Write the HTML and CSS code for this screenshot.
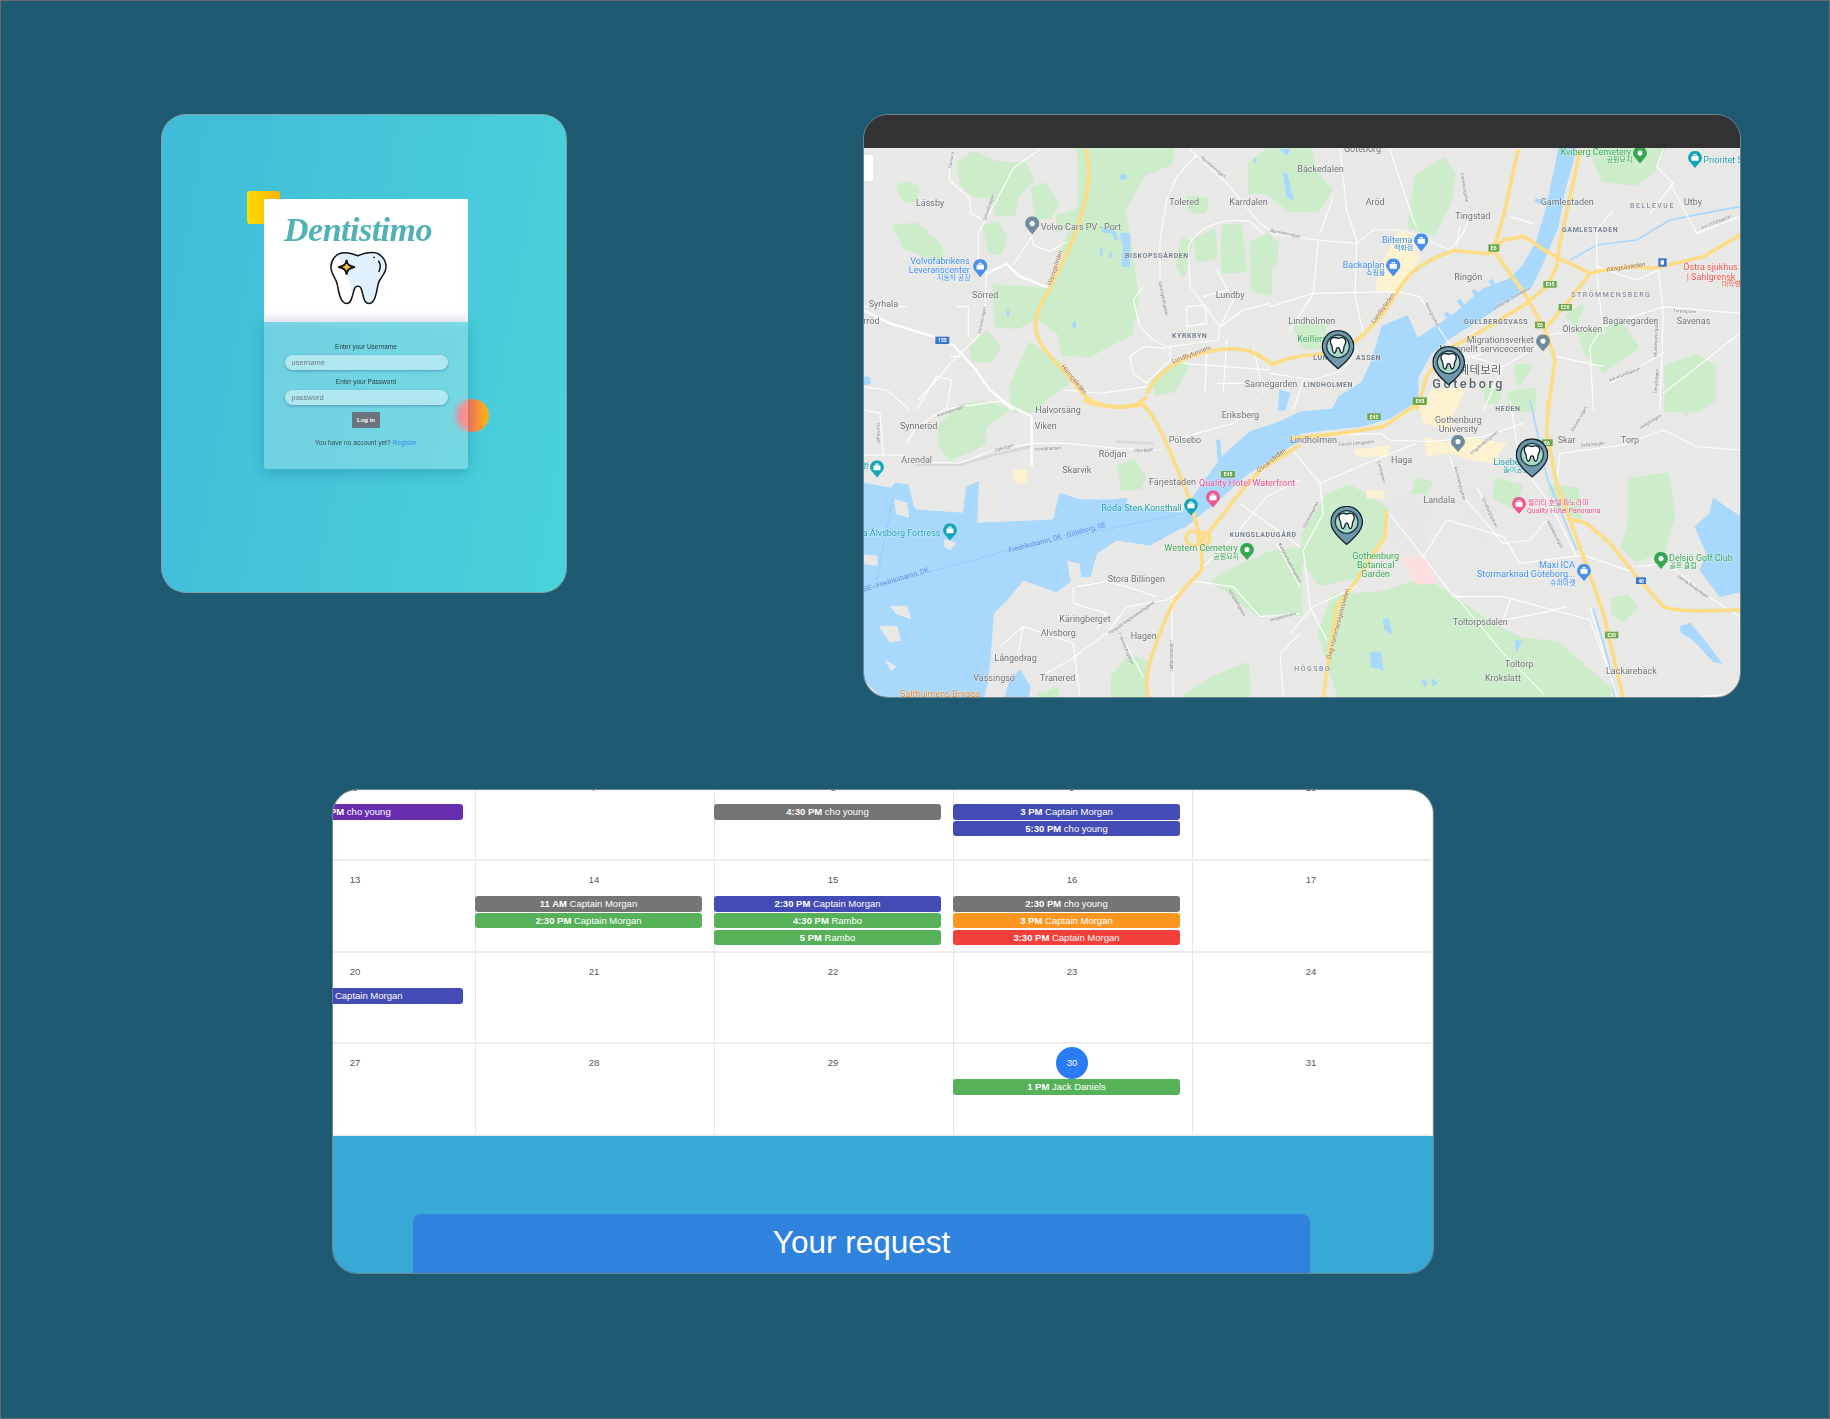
FILE: index.html
```html
<!DOCTYPE html>
<html lang="en">
  <head>
    <meta charset="UTF-8" />
    <meta name="viewport" content="width=device-width, initial-scale=1.0" />
    <title>Dentistimo</title>
    <link rel="stylesheet" href="styles.css">
  </head>
  <body>
    <div class="page">
      <div class="top-row">
        <!-- Login screen -->
        <section class="panel login">
          <div class="deco-square"></div>
          <div class="deco-circle"></div>
          <div class="logo-card">
            <div class="logo-text">Dentistimo</div>
            <svg class="logo-tooth" viewBox="262 212 184 168">
              <path class="tooth-base" d="M352 229C335 222 322 219 308 220C285 222 270 243 271 265C272 285 285 295 290 315C294 340 300 373 318 373C335 373 335 345 342 328C346 318 358 318 362 328C369 345 368 373 386 373C404 373 408 340 413 315C417 295 437 285 437 262C437 240 420 220 398 219C382 218 368 222 352 229Z"/>
              <path class="tooth-shade" d="M352 229C335 222 322 219 308 220C300 222 296 226 292 230C310 262 330 290 334 345C336 335 338 336 342 328C346 318 358 318 362 328C369 345 368 373 386 373C404 373 408 340 413 315C417 295 437 285 437 262C437 240 420 220 398 219C382 218 368 222 352 229Z"/>
              <path class="tooth-line" d="M352 229C335 222 322 219 308 220C285 222 270 243 271 265C272 285 285 295 290 315C294 340 300 373 318 373C335 373 335 345 342 328C346 318 358 318 362 328C369 345 368 373 386 373C404 373 408 340 413 315C417 295 437 285 437 262C437 240 420 220 398 219C382 218 368 222 352 229Z"/>
              <path class="tooth-line" d="M414 244C421 254 421 266 415 278"/>
              <circle cx="401" cy="234" r="2.5"/>
              <path class="tooth-star" d="M318 241C320 255 324 260 343 263C324 266 320 272 318 286C316 272 312 266 293 263C312 260 316 255 318 241Z"/>
            </svg>
          </div>
          <form class="login-form">
            <label class="login-label" for="username">Enter your Username</label>
            <input class="login-input" id="username" type="text" placeholder="username" />
            <label class="login-label" for="password">Enter your Password</label>
            <input class="login-input" id="password" type="text" placeholder="password" />
            <button class="login-btn" type="button">Log in</button>
            <p class="login-note">You have no account yet? <a href="#">Register</a></p>
          </form>
        </section>

        <!-- Map screen -->
        <section class="panel map-panel">
          <div class="map-bar"></div>
          <div class="map-wrap">
            <svg class="map" viewBox="863 148 878 550" width="878" height="550">
              <defs>
                <symbol id="pin" viewBox="0 0 98 118">
                  <path class="pin-body" d="M49 2A47 47 0 0 1 92 68C82 90 60 106 49 116C38 106 16 90 6 68A47 47 0 0 1 49 2Z"/>
                  <circle class="pin-disc" cx="49" cy="49" r="34"/>
                  <path class="pin-tooth" d="M49 25C44 23 39 22 35 23C28 24 25 30 26 36C27 42 30 45 31 50C32 58 33 69 38 69C43 69 43 60 45 55C46 52 52 52 53 55C55 60 55 69 60 69C65 69 66 58 67 50C68 45 72 42 72 36C72 29 67 23 62 23C58 22 54 23 49 25Z"/>
                </symbol>
                <symbol id="poi" viewBox="0 0 44 56">
                  <path fill="currentColor" d="M22 1A21 21 0 0 1 36 38L22 55L8 38A21 21 0 0 1 22 1Z"/>
                  <circle fill="#fff" cx="22" cy="22" r="8"/>
                </symbol>
                <symbol id="poi-box" viewBox="0 0 44 56">
                  <path fill="currentColor" d="M22 1A21 21 0 0 1 36 38L22 55L8 38A21 21 0 0 1 22 1Z"/>
                  <path fill="#fff" d="M11 17H33V32H11ZM17 17V11H27V17H24V14H20V17Z"/>
                </symbol>
              </defs>

              <!-- base shapes, north west -->
              <g transform="translate(850 100) scale(.33333)">
                <path class="park" d="M330 190L370 160L440 190L490 195L520 190L545 240L500 290L490 340L440 340L430 290L370 285L335 250Z"/>
                <path class="park" d="M145 260L170 250L200 265L195 300L165 300Z"/>
                <path class="park" d="M550 265L585 255L620 310L600 350L560 350Z"/>
                <path class="park" d="M405 380L440 372L465 410L450 458L420 455Z"/>
                <path class="park" d="M135 380L200 375L270 440L275 480L235 470L165 440Z"/>
                <path class="park" d="M685 148L965 148L960 190L880 220L820 330L850 520L860 600L840 700L780 730L720 765L640 760L630 700L575 660L600 560L650 480L640 440L690 350L625 390L625 350L690 330L690 180Z"/>
                <path class="park" d="M1040 420L1090 395L1095 470L1045 480Z"/>
                <path class="park" d="M985 500L1000 420L1020 430L1000 525Z"/>
                <path class="park" d="M1120 380L1170 380L1185 510L1120 515Z"/>
                <path class="park" d="M1205 430L1260 405L1260 580L1210 570Z"/>
                <path class="park" d="M1200 190L1260 148L1260 275L1200 275Z"/>
                <path class="park" d="M1015 295L1070 300L1060 335L1020 330Z"/>
                <path class="park" d="M435 560L590 570L570 650L500 680L440 675Z"/>
                <path class="park" d="M365 740L410 700L445 740L420 780L370 780Z"/>
                <path class="park" d="M485 860L540 735L640 800L650 850L590 890L560 930L490 930Z"/>
                <path class="park" d="M910 840L975 790L1010 800L970 870L920 880Z"/>
                <path class="water" d="M810 400L840 400L838 500L815 500L820 440Z"/>
                <ellipse class="water" cx="820" cy="231" rx="9" ry="8"/>
                <ellipse class="water" cx="754" cy="457" rx="3" ry="12"/>
                <ellipse class="water" cx="781" cy="466" rx="3" ry="8"/>
                <ellipse class="water" cx="474" cy="640" rx="3" ry="11"/>
                <ellipse class="water" cx="673" cy="675" rx="4" ry="11"/>
                <ellipse class="water" cx="50" cy="842" rx="12" ry="12"/>
                <ellipse class="water" cx="1215" cy="182" rx="3" ry="6"/>
                <path class="water-line" d="M755 390L790 395L800 420"/>
              </g>
              <!-- base shapes, north east -->
              <g transform="translate(1270 100) scale(.33333)">
                <path class="park" d="M0 148L120 148L130 210L180 270L140 330L60 330L0 280Z"/>
                <path class="park" d="M440 230L520 180L550 220L540 300L490 400L420 380Z"/>
                <path class="park" d="M960 148L1180 148L1150 210L1100 250L1000 240L985 200Z"/>
                <path class="park" d="M0 420L20 430L15 490L0 500Z"/>
                <path class="park" d="M75 680L160 680L170 740L100 740Z"/>
                <path class="park" d="M1190 800L1280 770L1330 800L1330 900L1280 930L1190 930Z"/>
                <path class="park" d="M930 700L1050 670L1100 740L1000 810L950 760Z"/>
                <path class="park" d="M895 650L935 620L915 670Z"/>
                <path class="park" d="M650 870L690 870L680 905L650 905Z"/>
                <path class="park" d="M720 880L790 870L790 930L720 930Z"/>
                <path class="park" d="M740 800L780 800L745 850Z"/>
                <path class="urban" d="M315 570L330 500L385 390L420 400L450 470L390 580Z"/>
                <path class="urban" d="M470 930L480 870L590 860L560 930Z"/>
                <path class="water" d="M40 220L50 220L70 300L50 290Z"/>
                <path class="water" d="M30 148L60 148L50 165Z"/>
                <path class="water" d="M30 870L60 880L45 930L25 930Z"/>
                <path class="water-line thin" d="M900 480L980 435L1100 420L1200 360L1300 340L1410 320"/>
                <path class="water-line" d="M610 570L630 600M565 600L585 625M525 640L545 655M660 540L680 565M795 300L830 310"/>
                <path class="water" d="M395 655L412 650L400 700L432 688L420 725L300 800L340 680Z"/>
              </g>
              <!-- base shapes, south west -->
              <g transform="translate(850 400) scale(.33333)">
                <path class="park" d="M270 80L330 20L400 10L470 30L400 80L400 130L300 175L270 130Z"/>
                <path class="park" d="M810 200L850 185L880 230L870 260L820 265Z"/>
                <path class="park" d="M1090 545L1170 500L1260 460L1350 450L1350 640L1220 640L1130 570Z"/>
                <path class="park" d="M790 830L840 770L890 790L880 895L790 895Z"/>
                <path class="park" d="M1000 895L1080 840L1190 795L1195 895Z"/>
                <path class="park" d="M570 885L620 870L620 895Z"/>
                <path class="urban" d="M490 208L530 208L530 250L495 250Z"/>
                <path class="water" d="M40 250L125 265L135 250L175 255L190 320L200 330L340 340L350 262L385 245L380 370L610 360L630 280L690 300L660 350L690 300L790 300L830 295L830 320L1000 340L1030 310L1110 240L1120 170L1200 100L1290 70L1350 40L1350 120L1290 160L1190 220L1100 300L1000 380L900 435L800 420L740 460L720 530L695 530L690 490L650 480L660 545L620 575L520 540L470 600L430 640L420 780L410 860L400 895L100 895L40 840Z"/>
                <path class="water" d="M1100 120L1110 120L1115 190L1105 190Z"/>
                <path class="water" d="M480 840L510 810L540 860L535 895L465 895Z"/>
                <path class="land" d="M135 300L170 310L175 350L140 340Z"/>
                <path class="land" d="M125 620L170 620L180 655L140 640Z"/>
                <path class="land" d="M90 680L140 680L150 720L120 725Z"/>
                <path class="land" d="M110 785L135 800L125 810Z"/>
                <path class="land" d="M40 465L80 470L80 495L45 490Z"/>
                <path class="land" d="M285 420L315 430L300 448L285 440Z"/>
                <path class="ferry" d="M80 540L130 290M40 570L480 450L1000 340"/>
              </g>
              <!-- base shapes, south east -->
              <g transform="translate(1290 400) scale(.33333)">
                <path class="park" d="M130 590L280 580L400 540L470 580L610 680L700 720L800 730L960 870L950 895L150 895L90 700Z"/>
                <path class="park" d="M40 410L110 290L180 260L210 280L290 330L270 420L200 530L90 550L40 480Z"/>
                <path class="park" d="M1020 240L1130 225L1150 340L1120 450L1090 460L1040 480L1000 440L1020 370Z"/>
                <path class="park" d="M970 600L1010 590L1035 620L1000 660L970 640Z"/>
                <path class="park" d="M620 240L690 260L670 320L615 290Z"/>
                <path class="park" d="M780 260L860 270L870 350L800 320Z"/>
                <path class="park" d="M1170 0L1210 0L1190 40Z"/>
                <path class="park" d="M380 240L420 250L395 300L370 280Z"/>
                <path class="urban" d="M190 150L300 135L290 170L200 170Z"/>
                <path class="urban" d="M230 270L280 270L280 295L230 295Z"/>
                <path class="urban" d="M400 110L470 130L520 110L650 130L610 190L540 180L480 160L410 170Z"/>
                <path class="urban" d="M380 0L500 0L480 90L400 70Z"/>
                <path class="pink" d="M330 470L410 470L440 550L380 555Z"/>
                <path class="plaza" d="M300 290L400 280L430 340L400 460L330 460L295 390Z"/>
                <path class="plaza" d="M510 260L560 240L640 380L570 440L520 360Z"/>
                <path class="water" d="M1270 295L1350 350L1350 575L1290 590L1230 510L1250 460L1215 380L1260 340Z"/>
                <path class="water" d="M1170 680L1200 670L1250 730L1295 790L1270 785L1210 720L1175 700Z"/>
                <path class="water" d="M280 660L295 655L305 700L285 690Z"/>
                <path class="water" d="M240 760L270 755L280 810L245 800Z"/>
                <path class="water" d="M675 720L695 725L680 752Z"/>
                <path class="water" d="M395 840L410 845L405 862Z"/>
                <path class="water" d="M425 835L442 850L428 858Z"/>
                <path class="water-line thin" d="M910 625L960 800L975 895"/>
                <path class="water-line thin" d="M720 0L740 90L770 230L860 450"/>
              </g>
              <!-- river, in page coordinates -->
              <path class="water" d="M1183 513L1223 457L1250 433L1280 423L1300 413L1333 410L1340 397L1363 383L1373 360L1383 327L1407 317L1417 340L1457 313L1483 290L1510 280L1523 267L1537 243L1547 210L1560 148L1575 148L1573 157L1563 193L1557 227L1543 260L1530 287L1503 303L1477 320L1450 337L1430 353L1417 377L1417 400L1390 417L1363 425L1290 433L1280 453L1247 473L1217 500L1183 527Z"/>

              <!-- minor roads -->
              <g class="roads" transform="translate(850 100) scale(.33333)">
                <path d="M570 148L490 205L440 300L385 400L385 480L410 520L405 640L385 710L300 790L270 830L205 900"/>
                <path class="wide" d="M40 630L120 670L250 710L310 735L370 800L420 870L490 930"/>
                <path class="wide" d="M410 520L470 492L510 530L600 565"/>
                <path d="M490 495L545 410L550 435L600 455L650 425"/>
                <path d="M300 150L298 240L360 295L362 340L400 360"/>
                <path d="M1020 148L1130 250L1230 370L1260 390"/>
                <path d="M1040 165L980 230L950 300L930 420L930 540"/>
                <path d="M1015 440C1040 380 1120 350 1200 365L1240 400"/>
                <path d="M1015 440L1020 560L1110 680L1105 720L960 740L960 780L890 850"/>
                <path d="M1110 680L1180 630L1260 610"/>
                <path d="M880 560L850 600L870 680L910 720L960 745"/>
                <path d="M1000 790L1260 810M1100 850L1260 850M1070 760L1065 880M1130 720L1120 880M1210 740L1240 880M1010 620L1065 615L1070 670L1010 680ZM1100 510L1150 600L1110 680M1060 590L1130 570M840 770L880 740L950 745M840 770L850 820L890 850"/>
                <path d="M640 870L750 880L890 860M40 860L110 870L180 930M200 930L260 830L305 840L290 925M300 925L470 900"/>
                <path d="M320 620L355 620L355 710M40 620L170 620M300 770L330 770"/>
              </g>
              <g class="roads" transform="translate(1270 100) scale(.33333)">
                <path d="M210 148L230 330L260 420L255 590L280 700M0 400L140 420L260 430L310 390L400 390L540 450M145 420L130 580L60 690M190 290L150 400M0 620L130 580L380 575L450 590L510 690L550 750"/>
                <path d="M360 148L430 360L440 380M570 380L560 440M600 350L580 400L540 450M720 350L790 370M1030 330L980 390L980 500L1100 540L1165 510M1165 510L1180 640L1170 930M980 520L1000 700M1200 250L1280 400L1410 350M1140 340L1210 250L1160 200L1180 148"/>
                <path d="M830 705L1000 680L1180 620L1410 640M1000 680L960 740L970 930M1180 760L1020 850M1180 880L1410 700M860 770L1000 800M640 930L700 800L800 740M500 800L640 760"/>
                <path d="M0 820L130 840L220 810L260 750M70 930L100 840M620 690L540 750L700 800"/>
              </g>
              <g class="roads" transform="translate(850 400) scale(.33333)">
                <path d="M40 165L150 165L190 185L330 190L430 150L550 130L650 130L800 145L930 150"/>
                <path class="wide" d="M450 0L545 50L545 200"/>
                <path d="M170 130L200 80L280 30L400 10M950 130L1040 100L1150 70L1210 30M40 30L90 40L100 165"/>
                <path d="M1040 540L950 600L830 620L770 700L660 780L570 830M680 560L770 545L830 560L920 590M670 560L670 610L770 640L740 690M450 740L520 680L670 730L690 895M810 700L880 830M965 600L970 895"/>
                <path d="M1040 545L1150 560L1230 650L1350 640M1060 500L1160 400L1250 290L1350 240M1170 310L1350 440M1280 430L1350 560M520 680L500 780M1300 895L1290 760L1350 700"/>
                <path class="rail" d="M195 195L330 195L430 165L540 140M800 125L910 130"/>
              </g>
              <g class="roads" transform="translate(1290 400) scale(.33333)">
                <path d="M0 110L270 100L300 120L420 125L580 110L700 70M290 330L400 470L470 360L640 410L690 490L880 465L1040 520"/>
                <path d="M490 580L640 760L760 880M400 470L490 590L640 590L900 660L970 850M810 160L1000 135L1120 90L1220 140L1350 150M810 160L800 250M660 0L690 190L780 310L860 470"/>
                <path d="M90 250L100 340L40 450L60 620L110 720M0 700L70 620L200 560M480 170L520 290L640 430M560 260L620 380M900 620L980 890M1040 500L1130 490L1270 600L1350 650M0 140L90 250L230 190L380 130M1230 890L1350 880M660 600L640 660L750 640L830 620M640 430L720 420L770 360"/>
              </g>

              <!-- highways -->
              <g class="hwys" transform="translate(850 100) scale(.33333)">
                <path d="M708 148C725 220 715 290 680 390C650 470 600 560 570 620C540 680 560 730 620 790C680 850 700 900 740 910C800 930 860 925 890 890"/>
                <path d="M890 880C920 820 980 770 1100 750C1180 740 1210 750 1270 795"/>
              </g>
              <g class="hwys" transform="translate(1270 100) scale(.33333)">
                <path d="M0 795C40 780 80 765 130 765L220 750C280 710 340 650 385 570C420 510 470 480 550 452L660 462"/>
                <path d="M745 148L700 350L670 450L770 590L830 700L855 780L835 930"/>
                <path d="M930 148C910 260 870 400 860 500L830 560L770 610L640 690L530 750L470 830L440 930"/>
                <path d="M660 460L700 420L760 410C800 430 840 470 900 490L960 520C1000 510 1060 495 1150 505L1300 470L1410 405"/>
                <path d="M960 520L890 610L830 680"/>
              </g>
              <g class="hwys" transform="translate(850 400) scale(.33333)">
                <path d="M700 0C740 20 800 25 880 15C920 50 950 130 1020 300C1050 400 1060 480 1055 510C1030 540 970 590 950 650C900 770 880 830 895 895"/>
                <path d="M1050 430L1090 380L1160 290L1230 210L1350 135"/>
                <circle cx="1030" cy="415" r="22"/>
                <circle cx="1062" cy="415" r="18"/>
              </g>
              <g class="hwys" transform="translate(1290 400) scale(.33333)">
                <path d="M0 115L150 100L280 80L370 20L385 0"/>
                <path d="M775 0L770 100L800 250L880 470L940 640L1000 895"/>
                <path d="M830 355L890 370L960 430L1040 530L1120 620C1180 640 1270 630 1350 630"/>
                <path d="M290 330L285 410L200 540L140 620L115 780L100 895"/>
              </g>

              <!-- route shields -->
              <g transform="translate(1270 100) scale(.33333)">
                <rect class="shield-g" x="655" y="433" width="33" height="22"/><text class="shield-t" x="671" y="450">E6</text>
                <rect class="shield-g" x="820" y="543" width="40" height="20"/><text class="shield-t" x="840" y="559">E45</text>
                <rect class="shield-g" x="866" y="612" width="40" height="20"/><text class="shield-t" x="886" y="628">E20</text>
                <rect class="shield-g" x="795" y="665" width="30" height="20"/><text class="shield-t" x="810" y="681">E6</text>
                <rect class="shield-g" x="428" y="895" width="42" height="20"/><text class="shield-t" x="449" y="911">E45</text>
                <rect class="shield-b" x="1165" y="475" width="25" height="25"/><rect fill="#fff" x="1172" y="481" width="10" height="13"/>
              </g>
              <g transform="translate(850 100) scale(.33333)">
                <rect class="shield-b" x="256" y="710" width="42" height="22"/><text class="shield-t" x="277" y="727">155</text>
              </g>
              <g transform="translate(850 400) scale(.33333)">
                <rect class="shield-g" x="1113" y="213" width="42" height="20"/><text class="shield-t" x="1134" y="229">E45</text>
              </g>
              <g transform="translate(1290 400) scale(.33333)">
                <rect class="shield-g" x="232" y="40" width="40" height="20"/><text class="shield-t" x="252" y="56">E45</text>
                <rect class="shield-g" x="370" y="-8" width="40" height="20"/><text class="shield-t" x="390" y="8">E45</text>
                <rect class="shield-g" x="755" y="118" width="33" height="20"/><text class="shield-t" x="771" y="134">E6</text>
                <rect class="shield-g" x="945" y="695" width="40" height="20"/><text class="shield-t" x="965" y="711">E20</text>
                <rect class="shield-b" x="1038" y="532" width="30" height="20"/><text class="shield-t" x="1053" y="548">40</text>
              </g>

              <!-- labels, north west -->
              <g class="labels" transform="translate(850 100) scale(.33333)">
                <text x="198" y="317">Lässby</text>
                <text x="572" y="389">Volvo Cars PV - Port</text>
                <text x="958" y="316">Tolered</text>
                <text x="1138" y="316">Karrdalen</text>
                <text class="area" x="825" y="473">BISKOPSGÅRDEN</text>
                <text class="blue" x="181" y="491">Volvofabrikens</text>
                <text class="blue" x="176" y="519">Leveranscenter</text>
                <text class="blue kr" x="261" y="540">지동차 공장</text>
                <text x="366" y="593">Sörred</text>
                <text x="1097" y="593">Lundby</text>
                <text x="56" y="622">Syrhala</text>
                <text x="40" y="672">rröd</text>
                <text class="area" x="966" y="715">KYRKBYN</text>
                <text x="1184" y="862">Sannegarden</text>
                <text class="hwy-lbl" transform="translate(604 557) rotate(-72)">Hisingsleden</text>
                <text class="hwy-lbl" transform="translate(632 800) rotate(50)">Hisingsleden</text>
                <text class="hwy-lbl" transform="translate(968 790) rotate(-20)">Lundbytunneln</text>
                <text class="road-lbl" transform="translate(408 362) rotate(-72)">Sörredsvägen</text>
                <text class="road-lbl" transform="translate(392 702) rotate(-78)">Sörredsvägen</text>
                <text class="road-lbl" transform="translate(303 205) rotate(-80)">Gamla S</text>
                <text class="road-lbl" transform="translate(1052 175) rotate(40)">Bjurslättsvägen</text>
                <text class="road-lbl" transform="translate(925 545) rotate(78)">Sannegårdsgatan</text>
              </g>
              <use href="#poi-box" class="c-blue" x="973" y="259" width="14.5" height="18.5"/>
              <use href="#poi" class="c-gray" x="1025" y="216" width="14.5" height="19"/>

              <!-- labels, north east -->
              <g class="labels" transform="translate(1270 100) scale(.33333)">
                <text x="222" y="157">Göteborg</text>
                <text x="82" y="216">Bäckedalen</text>
                <text x="287" y="316">Aröd</text>
                <text x="556" y="357">Tingstad</text>
                <text x="812" y="316">Gamlestaden</text>
                <text class="area wide-lbl" x="1080" y="323">BELLEVUE</text>
                <text x="1242" y="316">Utby</text>
                <text class="area" x="876" y="395">GAMLESTADEN</text>
                <text class="blue" x="336" y="428">Biltema</text>
                <text class="blue kr" x="372" y="450">백화점</text>
                <text class="blue" x="218" y="503">Backaplan</text>
                <text class="blue kr" x="288" y="525">쇼핑몰</text>
                <text x="553" y="541">Ringön</text>
                <text class="area wide-lbl" x="904" y="591">STRÖMMENSBERG</text>
                <text x="998" y="671">Bagaregarden</text>
                <text x="1220" y="671">Savenas</text>
                <text x="877" y="695">Olskroken</text>
                <text x="55" y="671">Lindholmen</text>
                <text class="green" x="82" y="726">Keillers</text>
                <text class="area" x="130" y="780">LUNDBY</text>
                <text class="area" x="258" y="780">ASSEN</text>
                <text class="area" x="582" y="672">GULLBERGSVASS</text>
                <text x="590" y="728">Migrationsverket</text>
                <text x="508" y="756">Nationellt servicecenter</text>
                <text class="area" x="100" y="862">LINDHOLMEN</text>
                <text class="city-kr" x="566" y="822">예테보리</text>
                <text class="city" x="487" y="864">Göteborg</text>
                <text class="green" x="872" y="164">Kviberg Cemetery</text>
                <text class="green kr" x="1010" y="186">공원묘지</text>
                <text class="teal" x="1300" y="189">Prioritet S</text>
                <text class="red" x="1240" y="511">Östra sjukhus</text>
                <text class="red" x="1250" y="539">| Sahlgrensk</text>
                <text class="red kr" x="1355" y="559">대학병</text>
                <text class="hwy-lbl" transform="translate(1010 515) rotate(-8)">Alingsåsleden</text>
                <text class="hwy-lbl" transform="translate(312 672) rotate(-54)">Lundbyleden</text>
                <text class="road-lbl" transform="translate(672 630) rotate(-30)">Gullbergs Strandgata</text>
                <text class="road-lbl" transform="translate(465 612) rotate(62)">Hisingsgatan</text>
                <text class="road-lbl" transform="translate(572 220) rotate(80)">Litteraturgatan</text>
                <text class="road-lbl" transform="translate(0 395) rotate(12)">Bjurslättsvägen</text>
                <text class="road-lbl" transform="translate(1295 388) rotate(-22)">von Utfallsgatan</text>
                <text class="road-lbl" transform="translate(1210 636) rotate(3)">Torpagatan</text>
                <text class="road-lbl" transform="translate(1160 770) rotate(-88)">Munkebäcksgatan</text>
                <text class="road-lbl" transform="translate(1020 845) rotate(-22)">Kärralundsgatan</text>
                <text class="road-lbl" transform="translate(1160 880) rotate(-85)">Delsjövägen</text>
              </g>
              <use href="#poi-box" class="c-blue" x="1414" y="233" width="14.5" height="19"/>
              <use href="#poi-box" class="c-blue" x="1386" y="258" width="14.5" height="19"/>
              <use href="#poi" class="c-gray" x="1536" y="334" width="14" height="18"/>
              <use href="#poi" class="c-green" x="1633" y="146" width="14" height="18"/>
              <use href="#poi-box" class="c-teal" x="1688" y="150" width="14" height="19"/>

              <!-- labels, south west -->
              <g class="labels" transform="translate(850 400) scale(.33333)">
                <text x="556" y="40">Halvorsäng</text>
                <text x="1115" y="54">Eriksberg</text>
                <text x="150" y="87">Synneröd</text>
                <text x="554" y="87">Viken</text>
                <text x="956" y="128">Pölsebo</text>
                <text x="154" y="189">Arendal</text>
                <text x="746" y="170">Rödjan</text>
                <text x="637" y="219">Skarvik</text>
                <text x="897" y="254">Färjestaden</text>
                <text class="pink" x="1047" y="259">Quality Hotel Waterfront</text>
                <text class="teal" x="754" y="334">Röda Sten Konsthall</text>
                <text class="teal" x="38" y="409">a Älvsborg Fortress</text>
                <text class="area" x="1139" y="411">KUNGSLADUGÅRD</text>
                <text class="green" x="943" y="454">Western Cemetery</text>
                <text class="green kr" x="1090" y="476">공원묘지</text>
                <text x="773" y="547">Stora Billingen</text>
                <text x="628" y="666">Käringberget</text>
                <text x="572" y="707">Alvsborg</text>
                <text x="842" y="717">Hagen</text>
                <text x="433" y="784">Långedrag</text>
                <text x="370" y="842">Vässingsö</text>
                <text x="570" y="842">Tranered</text>
                <text class="orange" x="150" y="892">Saltholmens Brygga</text>
                <text class="teal kr" x="38" y="204">한</text>
                <text class="ferry-lbl" transform="translate(478 458) rotate(-15)">Fredrikshamn, DK - Göteborg, SE</text>
                <text class="ferry-lbl" transform="translate(42 575) rotate(-17)">SE - Fredrikshamn, DK</text>
                <text class="hwy-lbl" transform="translate(1226 218) rotate(-38)">Oscarsleden</text>
                <text class="road-lbl" transform="translate(262 52) rotate(-20)">Arendalsvägen</text>
                <text class="road-lbl" transform="translate(80 70) rotate(88)">Grötvägen</text>
                <text class="road-lbl" transform="translate(435 155) rotate(-15)">Oljevägen</text>
                <text class="road-lbl" transform="translate(555 152) rotate(-3)">Nordatlanten</text>
                <text class="road-lbl" transform="translate(852 156) rotate(-3)">Oljevägen</text>
                <text class="road-lbl" transform="translate(778 705) rotate(-35)">Tångudd Seglarestadsgatan</text>
                <text class="road-lbl" transform="translate(805 700) rotate(68)">Fiskebäcksgatan</text>
                <text class="road-lbl" transform="translate(960 720) rotate(90)">Löjtnantsvägen</text>
                <text class="road-lbl" transform="translate(1135 570) rotate(60)">Hängdalsgatan</text>
                <text class="road-lbl" transform="translate(1262 665) rotate(-15)">Högsboleden</text>
                <text class="road-lbl" transform="translate(1285 432) rotate(62)">Kungsladugårdsgatan</text>
              </g>
              <use href="#poi-box" class="c-teal" x="870" y="460" width="14" height="18"/>
              <use href="#poi-box" class="c-teal" x="943" y="523" width="14" height="18"/>
              <use href="#poi-box" class="c-teal" x="1184" y="498" width="14" height="18"/>
              <use href="#poi-box" class="c-pink" x="1206" y="489" width="14" height="20"/>
              <use href="#poi" class="c-green" x="1240" y="542" width="14" height="19"/>

              <!-- labels, south east -->
              <g class="labels" transform="translate(1290 400) scale(.33333)">
                <text class="area" x="616" y="32">HEDEN</text>
                <text class="center" x="505" y="68">Gothenburg</text>
                <text class="center" x="505" y="96">University</text>
                <text x="0" y="128">Lindholmen</text>
                <text x="803" y="128">Skar</text>
                <text x="993" y="129">Torp</text>
                <text x="303" y="190">Haga</text>
                <text class="teal" x="610" y="196">Liseberg</text>
                <text class="teal kr" x="640" y="217">놀이공원</text>
                <text x="400" y="308">Landala</text>
                <text class="pink kr" x="713" y="316">퀄리티 호텔 파노라마</text>
                <text class="pink small" x="711" y="340">Quality Hotel Panorama</text>
                <text class="green center" x="257" y="476">Gothenburg</text>
                <text class="green center" x="257" y="503">Botanical</text>
                <text class="green center" x="257" y="531">Garden</text>
                <text class="green" x="1137" y="482">Delsjö Golf Club</text>
                <text class="green kr" x="1138" y="504">골프 클럽</text>
                <text class="blue" x="747" y="503">Maxi ICA</text>
                <text class="blue" x="561" y="531">Stormarknad Göteborg...</text>
                <text class="blue kr" x="780" y="554">슈퍼마켓</text>
                <text x="489" y="674">Toltorpsdalen</text>
                <text x="645" y="801">Toltorp</text>
                <text x="585" y="843">Krokslatt</text>
                <text x="948" y="821">Lackarebäck</text>
                <text class="area wide-lbl" x="13" y="812">HÖGSBO</text>
                <text class="hwy-lbl" transform="translate(122 778) rotate(-75)">Dag Hammarskjöldsleden</text>
                <text class="road-lbl" transform="translate(148 138) rotate(-5)">Första Långgatan</text>
                <text class="road-lbl" transform="translate(262 185) rotate(75)">Linnégatan</text>
                <text class="road-lbl" transform="translate(492 200) rotate(75)">Aschebergsgatan</text>
                <text class="road-lbl" transform="translate(575 295) rotate(65)">Götabergsgatan</text>
                <text class="road-lbl" transform="translate(545 165) rotate(-40)">Engelbrektsgatan</text>
                <text class="road-lbl" transform="translate(770 365) rotate(62)">Mölndalsvägen</text>
                <text class="road-lbl" transform="translate(872 140) rotate(-5)">Delsjövägen</text>
                <text class="road-lbl" transform="translate(1052 88) rotate(-32)">Delsjövägen</text>
                <text class="road-lbl" transform="translate(850 95) rotate(-60)">Danska vägen</text>
                <text class="road-lbl" transform="translate(1160 530) rotate(35)">Gamla Boråsvägen</text>
                <text class="road-lbl" transform="translate(45 385) rotate(-62)">Gröndalsgatan</text>
              </g>
              <use href="#poi" class="c-gray" x="1451" y="434" width="14" height="19"/>
              <use href="#poi-box" class="c-pink" x="1512" y="496" width="14" height="19"/>
              <use href="#poi-box" class="c-blue" x="1577" y="563" width="14" height="19"/>
              <use href="#poi" class="c-green" x="1654" y="551" width="14" height="19"/>

              <!-- clinic pins -->
              <use href="#pin" x="1321.7" y="330" width="32.7" height="39.3"/>
              <use href="#pin" x="1432.3" y="346" width="32.7" height="39.3"/>
              <use href="#pin" x="1515.7" y="438.3" width="32.7" height="39.3"/>
              <use href="#pin" x="1330.3" y="505.7" width="32.7" height="39.3"/>
            </svg>
            <div class="map-control"></div>
          </div>
        </section>
      </div>

      <!-- Calendar screen -->
      <section class="panel calendar">
        <div class="cal-view">
          <div class="cal-grid">
            <div class="cal-day"><div class="cal-num">6</div>
              <div class="ev ev-purple"><b>4:30 PM</b> cho young</div></div>
            <div class="cal-day"><div class="cal-num">7</div></div>
            <div class="cal-day"><div class="cal-num">8</div>
              <div class="ev ev-grey"><b>4:30 PM</b> cho young</div></div>
            <div class="cal-day"><div class="cal-num">9</div>
              <div class="ev ev-indigo"><b>3 PM</b> Captain Morgan</div>
              <div class="ev ev-indigo"><b>5:30 PM</b> cho young</div></div>
            <div class="cal-day"><div class="cal-num">10</div></div>

            <div class="cal-day"><div class="cal-num">13</div></div>
            <div class="cal-day"><div class="cal-num">14</div>
              <div class="ev ev-grey"><b>11 AM</b> Captain Morgan</div>
              <div class="ev ev-green"><b>2:30 PM</b> Captain Morgan</div></div>
            <div class="cal-day"><div class="cal-num">15</div>
              <div class="ev ev-indigo"><b>2:30 PM</b> Captain Morgan</div>
              <div class="ev ev-green"><b>4:30 PM</b> Rambo</div>
              <div class="ev ev-green"><b>5 PM</b> Rambo</div></div>
            <div class="cal-day"><div class="cal-num">16</div>
              <div class="ev ev-grey"><b>2:30 PM</b> cho young</div>
              <div class="ev ev-orange"><b>3 PM</b> Captain Morgan</div>
              <div class="ev ev-red"><b>3:30 PM</b> Captain Morgan</div></div>
            <div class="cal-day"><div class="cal-num">17</div></div>

            <div class="cal-day"><div class="cal-num">20</div>
              <div class="ev ev-indigo"><b>2:30 PM</b> Captain Morgan</div></div>
            <div class="cal-day"><div class="cal-num">21</div></div>
            <div class="cal-day"><div class="cal-num">22</div></div>
            <div class="cal-day"><div class="cal-num">23</div></div>
            <div class="cal-day"><div class="cal-num">24</div></div>

            <div class="cal-day"><div class="cal-num">27</div></div>
            <div class="cal-day"><div class="cal-num">28</div></div>
            <div class="cal-day"><div class="cal-num">29</div></div>
            <div class="cal-day"><div class="cal-num today">30</div>
              <div class="ev ev-green"><b>1 PM</b> Jack Daniels</div></div>
            <div class="cal-day"><div class="cal-num">31</div></div>
          </div>
        </div>
        <div class="cal-footer">
          <div class="request">Your request</div>
        </div>
      </section>
    </div>
  </body>
</html>
```

FILE: styles.css
```css
body {
  margin: 0;
  font-family: "Liberation Sans", Arial, sans-serif;
}

.page {
  box-sizing: border-box;
  height: 1419px;
  padding-top: 113px;
  background-color: #1f5a73;
  border: 1px solid #6b6b6b;
}

.top-row {
  display: flex;
  align-items: flex-start;
  gap: 296px;
  margin-left: 160px;
}

.panel {
  box-sizing: border-box;
  overflow: hidden;
  border: 1px solid rgba(150, 150, 150, 0.7);
  border-radius: 25px;
}

/* login */
.login {
  position: relative;
  width: 406px;
  height: 479px;
  padding: 84px 0 0 102px;
  background: linear-gradient(100deg, #41bbd9, #4ad3da);
}

.deco-square {
  position: absolute;
  left: 85px;
  top: 76px;
  width: 33px;
  height: 33px;
  border-radius: 3px;
  background: linear-gradient(to right, #ffdc00, #f9b207);
}

.deco-circle {
  position: absolute;
  left: 294px;
  top: 284px;
  width: 33px;
  height: 33px;
  border-radius: 50%;
  background: linear-gradient(to right, #f8558f, #fab40f);
}

.logo-card {
  position: relative;
  display: flex;
  flex-direction: column;
  align-items: center;
  width: 204px;
  height: 123px;
  background: linear-gradient(to bottom, #fff 90%, #f1f0f6);
}

.logo-text {
  align-self: flex-start;
  height: 36px;
  margin: 13px 0 0 20px;
  font-family: "Liberation Serif", serif;
  font-size: 34px;
  line-height: 36px;
  letter-spacing: -0.5px;
  font-style: italic;
  font-weight: bold;
  color: #52b1b5;
  filter: blur(0.4px);
}

.logo-tooth {
  width: 61px;
  height: 56px;
  margin: 2px 0 0 -16px;
  filter: blur(0.3px);
}

.tooth-base {
  fill: #fff;
}

.tooth-shade {
  fill: #e1f0fd;
}

.tooth-line {
  fill: none;
  stroke: #111;
  stroke-width: 4.5;
}

.tooth-star {
  fill: #f6bf3c;
  stroke: #111;
  stroke-width: 5.5;
}

.login-form {
  position: relative;
  display: flex;
  flex-direction: column;
  align-items: center;
  box-sizing: border-box;
  width: 204px;
  height: 147px;
  padding-top: 21px;
  border-radius: 0 0 3px 3px;
  background: rgba(255, 255, 255, 0.24);
  backdrop-filter: blur(3px);
  box-shadow: 0 4px 14px rgba(20, 80, 130, 0.28);
}

.login-label {
  margin-bottom: 4px;
  font-size: 6.5px;
  line-height: 8px;
  color: #2c3e46;
  filter: blur(0.25px);
}

.login-input {
  box-sizing: border-box;
  width: 163px;
  height: 15px;
  margin-bottom: 8px;
  padding: 0 7px;
  border: 0;
  border-radius: 8px;
  font-family: "Liberation Sans", Arial, sans-serif;
  font-size: 7.5px;
  background: #b0e7f0;
  box-shadow: 0 1px 3px rgba(40, 100, 150, 0.5);
}

.login-input::placeholder {
  color: #6f7c82;
}

.login-btn {
  width: 28px;
  height: 16px;
  margin-top: -1px;
  padding: 0;
  border: 0;
  border-radius: 1px;
  font-family: "Liberation Sans", Arial, sans-serif;
  font-size: 6px;
  font-weight: bold;
  color: #fff;
  background: #6c757d;
}

.login-note {
  margin: 8px 0 0;
  font-size: 6.6px;
  line-height: 14px;
  color: #3a4a52;
  filter: blur(0.25px);
}

.login-note a {
  color: #3b8fe8;
  text-decoration: none;
}

/* map */
.map-panel {
  width: 878px;
  height: 584px;
}

.map-bar {
  height: 33px;
  background-color: #333;
}

.map-wrap {
  position: relative;
  height: 550px;
}

.map {
  display: block;
  margin-left: -1px;
  background-color: #e8e8e6;
  filter: blur(0.35px);
}

.map-control {
  position: absolute;
  left: 0;
  top: 7px;
  width: 9px;
  height: 26px;
  border-radius: 0 2px 2px 0;
  background-color: #fff;
}

.park {
  fill: #cdecca;
  stroke: #cdecca;
  stroke-width: 14;
  stroke-linejoin: round;
}

.water {
  fill: #a9d8fd;
  stroke: #a9d8fd;
  stroke-width: 3;
  stroke-linejoin: round;
}

.land {
  fill: #e8e8e6;
  stroke: #e8e8e6;
  stroke-width: 5;
  stroke-linejoin: round;
}

.urban { fill: #fdf2cf; }
.pink { fill: #fbdfe0; }
.plaza { fill: #e5e7e8; }

.water-line {
  fill: none;
  stroke: #a9d8fd;
  stroke-width: 13;
}

.water-line.thin {
  stroke-width: 5;
}

.ferry {
  fill: none;
  stroke: #8ab8ea;
  stroke-width: 2;
  stroke-dasharray: 10 6;
}

.roads path {
  fill: none;
  stroke: #fff;
  stroke-width: 3.5;
  stroke-opacity: 0.9;
  stroke-linejoin: round;
}

.roads path.wide {
  stroke-width: 7;
}

.roads path.rail {
  stroke: #d6d6d6;
  stroke-width: 8;
}

.hwys path,
.hwys circle {
  fill: none;
  stroke: #fcdc84;
  stroke-width: 11;
  stroke-linejoin: round;
}

.shield-g { fill: #6ea84a; }
.shield-b { fill: #3a78d0; }

.shield-t {
  font-family: Roboto, sans-serif;
  font-size: 15px;
  font-weight: bold;
  text-anchor: middle;
  fill: #fff;
}

.labels text {
  font-family: Roboto, sans-serif;
  font-size: 27px;
  fill: #6e7275;
  paint-order: stroke;
  stroke: rgba(255, 255, 255, 0.5);
  stroke-width: 3px;
}

.labels text.kr {
  font-family: "Noto Sans CJK KR", sans-serif;
  font-size: 21px;
}

.labels text.area {
  font-size: 21px;
  font-weight: bold;
  letter-spacing: 1.8px;
  fill: #747f8c;
}

.labels text.wide-lbl {
  font-weight: 500;
  letter-spacing: 4.5px;
  fill: #828c99;
}

.labels text.city {
  font-size: 38px;
  font-weight: 500;
  letter-spacing: 7.5px;
  fill: #5f6368;
}

.labels text.city-kr {
  font-family: "Noto Sans CJK KR", sans-serif;
  font-size: 34px;
  letter-spacing: 1px;
  fill: #5f6368;
}

.labels text.blue { fill: #3f8ef0; }
.labels text.teal { fill: #1fa0ad; }
.labels text.pink { fill: #ee4d8c; }
.labels text.green { fill: #3aa657; }
.labels text.orange { fill: #e88b2a; }
.labels text.red { fill: #ef5350; }

.labels text.small {
  font-size: 21px;
}

.labels text.center {
  text-anchor: middle;
}

.labels text.road-lbl {
  font-size: 13.5px;
  fill: #7d8184;
}

.labels text.hwy-lbl {
  font-size: 19px;
  fill: #9c6a2e;
}

.labels text.ferry-lbl {
  font-size: 21px;
  fill: #5a8fdc;
  stroke: none;
}

.pin-body {
  fill: #6e98ab;
  stroke: #16252c;
  stroke-width: 4;
}

.pin-disc {
  fill: #a8d8c6;
  stroke: #233640;
  stroke-width: 4;
}

.pin-tooth {
  fill: #fff;
  stroke: #16252c;
  stroke-width: 4;
}

.c-blue { color: #4a8fe8; }
.c-gray { color: #6f8b9c; }
.c-green { color: #34a853; }
.c-teal { color: #12a5b5; }
.c-pink { color: #f0568f; }

/* calendar */
.calendar {
  width: 1102px;
  height: 485px;
  margin: 91px 0 0 331px;
}

.cal-view {
  height: 346px;
  overflow: hidden;
  background-color: #fff;
}

.cal-grid {
  display: grid;
  grid-template-columns: repeat(5, 239px);
  grid-template-rows: 92px 92px 91px 92px;
  width: 1196px;
  margin: -21px 0 0 -97px;
  border-right: 1px solid #e6e6e6;
}

.cal-day {
  box-sizing: border-box;
  border-left: 1px solid #e6e6e6;
  border-bottom: 2px solid #ececec;
}

.cal-num {
  width: 32px;
  height: 32px;
  margin: 3px 0 0 102px;
  font-size: 9.5px;
  line-height: 32px;
  text-align: center;
  color: #555;
}

.cal-num.today {
  position: relative;
  border-radius: 50%;
  color: #fff;
  background-color: #2a7cf6;
}

.ev {
  position: relative;
  box-sizing: border-box;
  height: 15.5px;
  margin: 1.3px 12px 0 -1px;
  border-radius: 3px;
  font-size: 9.5px;
  line-height: 15px;
  text-align: center;
  white-space: nowrap;
  color: #fff;
}

.cal-num + .ev {
  margin-top: 0;
}

.ev-purple { background-color: #672eb0; }
.ev-grey { background-color: #757575; }
.ev-indigo { background-color: #434bb4; }
.ev-green { background-color: #57b158; }
.ev-orange { background-color: #fb9720; }
.ev-red { background-color: #f33f3a; }

.cal-footer {
  box-sizing: border-box;
  height: 137px;
  padding: 78px 0 0 80px;
  background-color: #38a8d6;
}

.request {
  width: 897px;
  height: 60px;
  border-radius: 8px 8px 0 0;
  font-size: 31.5px;
  line-height: 56px;
  text-align: center;
  color: #fff;
  background-color: #3083dc;
}
```
